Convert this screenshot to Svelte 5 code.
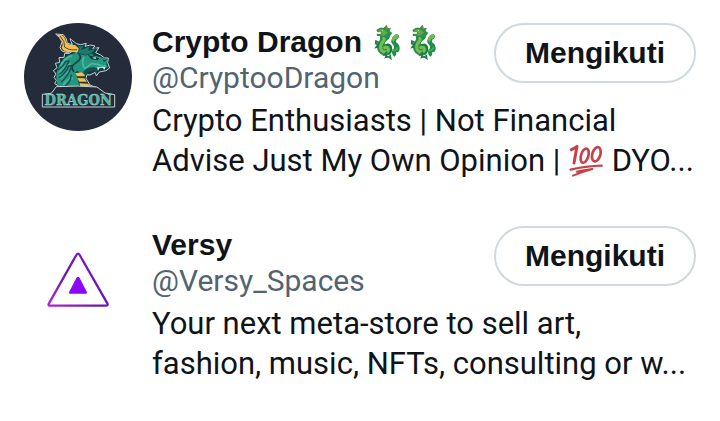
<script>
  const accounts = [
    {
      name: 'Crypto Dragon',
      badges: 2,
      handle: 'CryptooDragon',
      logo: 'dragon',
      bio: ['Crypto Enthusiasts | Not Financial', 'Advise Just My Own Opinion | :100: DYO...']
    },
    {
      name: 'Versy',
      badges: 0,
      handle: 'Versy_Spaces',
      logo: 'versy',
      bio: ['Your next meta-store to sell art,', 'fashion, music, NFTs, consulting or w...']
    }
  ];

  let following = $state(accounts.map(() => true));

  function toggleFollow(index) {
    following[index] = !following[index];
  }
</script>

{#snippet dragonEmoji()}
  <svg class="emoji" viewBox="18 21 108 108" role="img" aria-label="dragon">
    <path d="M91 119 Q80 109 86 98 Q94 90 87 83 Q78 76 84 64 Q91 50 101 52 Q109 57 102 65 Q94 68 96 76 Q108 83 107 96 Q105 108 96 105 Q99 114 91 119Z" fill="#1d8f4b" />
    <path d="M89 76 Q80 68 87 58 Q95 49 104 55 Q104 64 93 67Z" fill="#76b956" />
    <path d="M47 54 Q51 65 44 76 Q34 91 44 105 Q56 120 75 112 Q89 103 83 86 Q75 76 66 82 Q58 80 67 72 Q81 64 78 49 L54 46Z" fill="#259148" />
    <path d="M57 60 Q64 65 56 75 Q47 85 51 97 Q58 108 70 104 Q76 99 71 92 Q64 89 59 94" fill="none" stroke="#76bd55" stroke-width="9" />
    <path d="M66 84 Q76 80 81 92 Q84 104 73 113" fill="none" stroke="#137c42" stroke-width="5" />
    <path d="M53 43 L40 45 L37 39 L48 32 L60 32 L65 26 L69 34 L80 34 L77 42 L85 48 L78 57 L65 62 L48 57 L39 57 L38 50 L50 50Z" fill="#2b9150" />
    <path d="M48 37 L62 38 L72 47 L60 56 L49 55 L56 48 L41 45Z" fill="#62a94c" />
    <path d="M40 45 L50 46 L51 50 L42 50Z" fill="#eef0cf" />
    <path d="M62 33 L67 27 L70 34 M69 38 L79 34" stroke="#8a7b35" stroke-width="4" fill="none" />
    <circle cx="55" cy="40" r="2" fill="#e3e590" />
    <path d="M46 77 L36 72 L35 80 L43 82 L36 91 L44 90 M69 104 L61 114 L68 113 L65 121 L73 119 L80 124 L78 113" stroke="#1c7e46" stroke-width="5" fill="none" />
    <path d="M85 99 Q94 104 101 91" stroke="#4dae50" stroke-width="5" fill="none" />
  </svg>
{/snippet}

{#snippet hundredEmoji()}
  <svg class="emoji" viewBox="36 22 108 108" role="img" aria-label="100">
    <g fill="none" stroke="#c8414a" stroke-linecap="round" stroke-linejoin="round">
      <path d="M46 42 Q55 38 63 32 L54 82" stroke-width="9" />
      <ellipse cx="86" cy="60" rx="11" ry="22" transform="rotate(17 86 60)" stroke-width="8" />
      <ellipse cx="121" cy="56" rx="12" ry="22" transform="rotate(17 121 56)" stroke-width="8" />
      <path d="M44 102 Q88 91 137 90" stroke-width="7" />
      <path d="M62 108 Q82 103 109 100 Q80 108 51 120" stroke-width="6" />
    </g>
  </svg>
{/snippet}

{#snippet dragonLogo()}
  <svg class="avatar" viewBox="24 21 324 324" role="img" aria-label="Crypto Dragon">
    <circle cx="186" cy="183" r="162" fill="#242b3a" />
    <path d="M124 218 L124 207 L116 203 L121 193 L114 184 L120 174 L112 164 L123 155 L118 142 L131 139 L129 125 L144 124 L146 112 L160 112 L169 105 L154 110 L138 105 L132 95 L138 77 L130 64 L119 54 L142 56 L151 69 L154 82 L169 86 L162 68 L181 83 L194 86 L211 82 L207 91 L224 87 L237 90 L230 98 L249 95 L239 110 L254 117 L266 126 L277 126 L275 140 L281 156 L270 164 L250 168 L241 180 L238 169 L222 177 L213 176 L210 187 L222 207 L240 214Z" fill="#173a42" stroke="#c3d3d6" stroke-width="3" />
    <path d="M127 215 Q114 183 128 152 Q143 118 176 112 L191 98 L222 101 L232 119 L254 123 L273 131 L271 147 L277 154 L260 156 L242 158 L233 154 L213 166 L200 178 L184 164 L176 171 L186 188 L190 215Z" fill="#239780" />
    <path d="M124 56 Q145 53 150 78 Q156 89 177 87 L188 97 L187 110 L171 108 Q143 111 137 96 Q147 81 124 56Z" fill="#f6bd4c" />
    <path d="M132 60 Q148 77 146 93 Q159 104 183 101" fill="none" stroke="#5b4a3c" stroke-width="3" />
    <path d="M165 73 L183 88 L194 91 L205 88 L196 101 L222 90 L218 103 L240 97 L226 113 L208 117 L184 112 L191 98 Z" fill="#187c70" stroke="#173a42" stroke-width="2" />
    <path d="M133 151 Q145 125 168 119 M129 172 Q144 147 165 145 M134 189 Q146 168 162 166 M143 208 Q151 187 171 187" fill="none" stroke="#43b399" stroke-width="6" />
    <path d="M125 162 Q142 152 149 136 L159 135 Q146 165 130 174 M128 186 Q151 171 158 150 L167 148 Q158 180 135 199 M145 212 Q164 201 166 176" fill="none" stroke="#174d50" stroke-width="4" />
    <path d="M187 111 Q202 128 180 140 Q160 151 174 168" fill="none" stroke="#153e45" stroke-width="5" />
    <path d="M204 123 Q194 142 207 158 L226 143 L246 145 L259 151 L270 149" fill="none" stroke="#48b99d" stroke-width="5" />
    <path d="M215 117 L226 130 L245 133 L250 127 L231 121Z" fill="#153e45" />
    <path d="M228 125 L240 124 L239 129Z" fill="#f2f4ed" />
    <path d="M260 131 L271 132 L264 138Z" fill="#153e45" />
    <path d="M202 167 Q215 151 234 154 L247 158 L241 174 L234 162 L218 168 L205 184Z" fill="#174e50" />
    <path d="M243 154 L246 164 L251 155 L260 155 L265 161 L269 153Z" fill="#f1eee5" />
    <path d="M177 172 L196 169 L207 177 L205 181 L183 181Z M184 186 L205 187 L213 197 L190 197Z M190 202 L216 203 L226 212 L193 211Z" fill="#f6bd4c" />
    <path d="M79 273 V235 L106 232 L121 212 Q186 208 243 213 L267 231 L296 236 L296 273Z" fill="#242b3a" stroke="#c3d3d6" stroke-width="3" />
    <text x="187" y="266" text-anchor="middle" class="logo-text">DRAGON</text>
  </svg>
{/snippet}

{#snippet versyLogo()}
  <svg class="avatar" viewBox="-36 -42 324 324" role="img" aria-label="Versy">
    <defs>
      <linearGradient id="versy-stroke" x1="0" y1="1" x2="1" y2="0">
        <stop offset="0" stop-color="#b026cf" />
        <stop offset="0.45" stop-color="#6519ac" />
        <stop offset="1" stop-color="#8618e8" />
      </linearGradient>
    </defs>
    <circle cx="126" cy="120" r="162" fill="#fff" />
    <path d="M121 45 Q126 37 131 45 L214 190 Q217 197 209 197 H43 Q35 197 39 190Z" fill="none" stroke="url(#versy-stroke)" stroke-width="7" />
    <path d="M121 114 Q126 106 131 114 L153 157 Q154 161 150 161 H102 Q98 161 99 157Z" fill="#8a08f5" />
  </svg>
{/snippet}

<main>
  {#each accounts as account, i}
    <article class="account">
      {#if account.logo === 'dragon'}
        {@render dragonLogo()}
      {:else}
        {@render versyLogo()}
      {/if}
      <div class="details">
        <div class="top">
          <div class="identity">
            <h2>
              {account.name}
              {#each Array(account.badges) as _}{@render dragonEmoji()}{/each}
            </h2>
            <a href={'#' + account.handle}>@{account.handle}</a>
          </div>
          <button type="button" aria-pressed={following[i]} onclick={() => toggleFollow(i)}>
            {following[i] ? 'Mengikuti' : 'Ikuti'}
          </button>
        </div>
        <p>
          {#each account.bio as line}
            <span class="line">
              {#each line.split(':100:') as part, n}{#if n > 0}{@render hundredEmoji()}{/if}{part}{/each}
            </span>
          {/each}
        </p>
      </div>
    </article>
  {/each}
</main>

<style>
  :global(body) {
    margin: 0;
    background: #fff;
  }
  main {
    font-family: Roboto, 'Liberation Sans', sans-serif;
    color: #0f1419;
  }
  .account {
    display: flex;
    gap: 20px;
    padding: 23px 24px 22px;
  }
  .avatar {
    flex: none;
    width: 108px;
    height: 108px;
  }
  .details {
    flex: 1;
    min-width: 0;
  }
  .top {
    display: flex;
    justify-content: space-between;
    align-items: flex-start;
  }
  .identity {
    display: flex;
    flex-direction: column;
    padding-top: 1px;
  }
  h2 {
    margin: 0;
    font-family: 'Liberation Sans', Arial, sans-serif;
    font-size: 30px;
    line-height: 36px;
    font-weight: 700;
    white-space: nowrap;
  }
  a {
    color: #536471;
    font-size: 30px;
    line-height: 36px;
    text-decoration: none;
  }
  button {
    box-sizing: border-box;
    height: 60px;
    padding: 0 29px;
    border: 2px solid #cfd9de;
    border-radius: 30px;
    background: #fff;
    color: #0f1419;
    font-family: 'Liberation Sans', Arial, sans-serif;
    font-size: 30px;
    font-weight: 700;
    cursor: pointer;
  }
  p {
    margin: 5px 0 0;
    font-size: 31px;
    line-height: 40px;
  }
  .line {
    display: block;
  }
  .emoji {
    width: 36px;
    height: 36px;
    margin: -4px 0;
    vertical-align: -4px;
  }
  .logo-text {
    font-family: 'DejaVu Serif Condensed', 'Liberation Serif', serif;
    font-size: 44px;
    font-weight: 700;
    fill: #45b99f;
    stroke: #c3dcda;
    stroke-width: 1px;
  }
</style>
